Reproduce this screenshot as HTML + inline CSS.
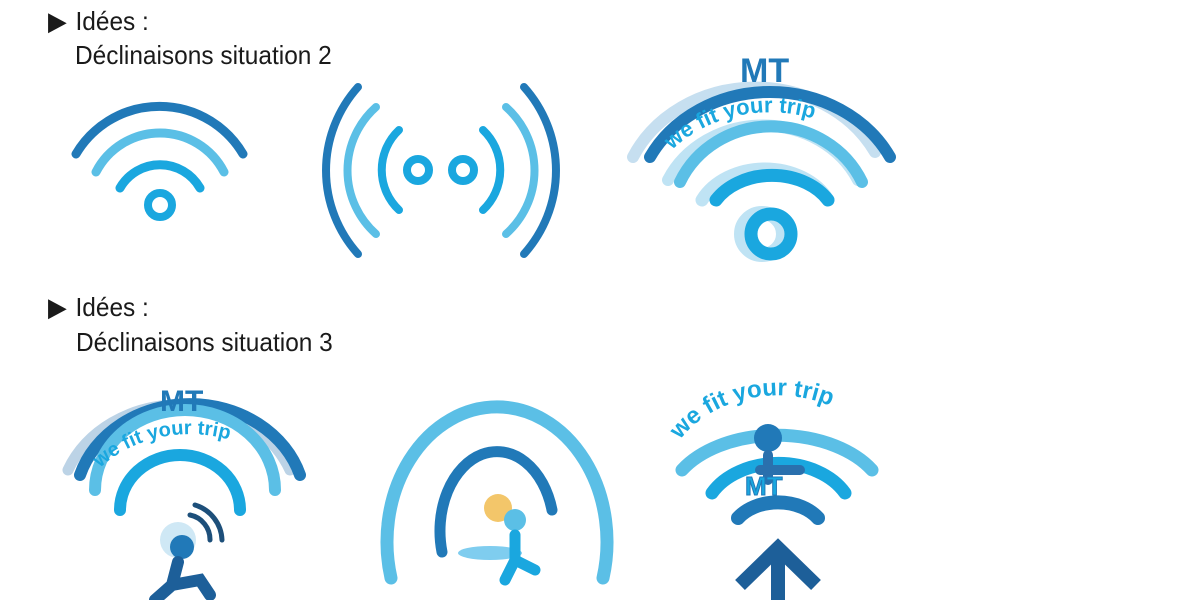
<!DOCTYPE html>
<html><head><meta charset="utf-8"><style>
html,body{margin:0;padding:0;background:#fff;width:1181px;height:600px;overflow:hidden;position:relative}
.t{position:absolute;font-family:"Liberation Sans Narrow","Liberation Sans",sans-serif;font-size:26px;color:#1a1a1a;transform-origin:0 0;transform:scaleX(0.94);white-space:nowrap;line-height:30px}
svg{position:absolute;left:0;top:0}
</style></head><body>
<div class="t" style="left:48px;top:6px">▶ <span style="margin-left:2px">Idées :</span></div>
<div class="t" style="left:75px;top:40px">Déclinaisons situation 2</div>
<div class="t" style="left:48px;top:292px">▶ <span style="margin-left:2px">Idées :</span></div>
<div class="t" style="left:76px;top:327px">Déclinaisons situation 3</div>
<svg width="1181" height="600" viewBox="0 0 1181 600" fill="none" stroke-linecap="round">
<defs>
<path id="ta" d="M672 150 A130 110 0 0 1 868 150"/>
<path id="tb" d="M100 468 A120 100 0 0 1 280 468"/>
<path id="tc" d="M680 440 A115 95 0 0 1 875 440"/>
</defs>
<!-- icon 1 -->
<path d="M76 154 A97 97 0 0 1 243 154" stroke="#2179b8" stroke-width="9"/>
<path d="M96 172 A72 72 0 0 1 224 172" stroke="#5bbfe6" stroke-width="9"/>
<path d="M120 188 A46 46 0 0 1 200 188" stroke="#1aa7df" stroke-width="9"/>
<circle cx="160" cy="205" r="12" stroke="#1aa7df" stroke-width="8"/>
<!-- icon 2 -->
<circle cx="418" cy="170" r="11" stroke="#1aa7df" stroke-width="8"/>
<circle cx="463" cy="170" r="11" stroke="#1aa7df" stroke-width="8"/>
<path d="M399 130 A55 55 0 0 0 399 210" stroke="#1aa7df" stroke-width="8"/>
<path d="M483 130 A55 55 0 0 1 483 210" stroke="#1aa7df" stroke-width="8"/>
<path d="M376 107 A85 85 0 0 0 376 234" stroke="#5bbfe6" stroke-width="8"/>
<path d="M506 107 A85 85 0 0 1 506 234" stroke="#5bbfe6" stroke-width="8"/>
<path d="M358 87 A125 125 0 0 0 358 254" stroke="#2179b8" stroke-width="8"/>
<path d="M524 87 A125 125 0 0 1 524 254" stroke="#2179b8" stroke-width="8"/>
<!-- icon 3 -->
<path d="M633 157 A135 120 0 0 1 875 152" stroke="#c6dff0" stroke-width="12"/>
<path d="M650 157 A135 120 0 0 1 890 157" stroke="#2179b8" stroke-width="12"/>
<path d="M668 180 A105 95 0 0 1 858 180" stroke="#bfe3f4" stroke-width="12"/>
<path d="M680 182 A100 95 0 0 1 862 182" stroke="#5bbfe6" stroke-width="12"/>
<path d="M702 200 A70 55 0 0 1 828 200" stroke="#bfe3f4" stroke-width="13"/>
<path d="M716 200 A65 50 0 0 1 828 200" stroke="#1aa7df" stroke-width="13"/>
<circle cx="762" cy="234" r="21" stroke="#bfe3f4" stroke-width="14"/>
<circle cx="771" cy="234" r="20" stroke="#1aa7df" stroke-width="13"/>
<text x="740" y="82" font-family="Liberation Sans,sans-serif" font-weight="bold" font-size="34" fill="#2179b8" stroke="none">MT</text>
<text font-family="Liberation Sans,sans-serif" font-weight="bold" font-size="22" fill="#1aa7df" stroke="none"><textPath href="#ta">we fit your trip</textPath></text>
<!-- bottom left -->
<path d="M68 470 A120 105 0 0 1 290 470" stroke="#bcd3e6" stroke-width="11"/>
<path d="M80 475 A115 100 0 0 1 300 475" stroke="#2179b8" stroke-width="12"/>
<path d="M95 490 A90 80 0 0 1 275 490" stroke="#5bbfe6" stroke-width="12"/>
<path d="M120 510 A60 55 0 0 1 240 510" stroke="#1aa7df" stroke-width="12"/>
<circle cx="178" cy="540" r="18" fill="#cfe8f5" stroke="none"/>
<path d="M190 515 A25 25 0 0 1 210 540 M195 505 A38 38 0 0 1 222 540" stroke="#1d4f7a" stroke-width="5"/>
<circle cx="182" cy="547" r="12" fill="#2179b8" stroke="none"/>
<path d="M178 562 L172 585 L200 580 L210 595 M172 585 L155 600" stroke="#1d5f99" stroke-width="12"/>
<text x="160" y="411" font-family="Liberation Sans,sans-serif" font-weight="bold" font-size="30" fill="#2179b8" stroke="none">MT</text>
<text font-family="Liberation Sans,sans-serif" font-weight="bold" font-size="20" fill="#1aa7df" stroke="none"><textPath href="#tb">we fit your trip</textPath></text>
<!-- bottom middle -->
<path d="M391 578 A110 135 0 1 1 603 578" stroke="#5bbfe6" stroke-width="13"/>
<path d="M442 552 A56 78 0 0 1 552 510" stroke="#2179b8" stroke-width="11"/>
<circle cx="498" cy="508" r="14" fill="#f3c66a" stroke="none"/>
<circle cx="515" cy="520" r="11" fill="#5bbfe6" stroke="none"/>
<ellipse cx="490" cy="553" rx="32" ry="7" fill="#7fcdef" stroke="none"/>
<path d="M515 535 L515 560 L535 570 M515 560 L505 580" stroke="#1aa7df" stroke-width="11"/>
<!-- bottom right -->
<text font-family="Liberation Sans,sans-serif" font-weight="bold" font-size="24" fill="#1aa7df" stroke="none"><textPath href="#tc">we fit your trip</textPath></text>
<path d="M682 470 A110 70 0 0 1 872 470" stroke="#5bbfe6" stroke-width="13"/>
<path d="M712 493 A75 55 0 0 1 845 493" stroke="#1aa7df" stroke-width="13"/>
<path d="M738 518 A48 35 0 0 1 818 518" stroke="#2179b8" stroke-width="14"/>
<circle cx="768" cy="438" r="14" fill="#2179b8" stroke="none"/>
<path d="M768 455 L768 480 M760 470 L800 470" stroke="#2a70ad" stroke-width="10"/>
<text x="745" y="495" font-family="Liberation Sans,sans-serif" font-weight="bold" font-size="26" fill="#1aa7df" stroke="#2179b8" stroke-width="1">MT</text>
<path d="M740 585 L778 548 L816 585 M778 548 L778 600" stroke="#1d5f99" stroke-width="14" stroke-linecap="butt"/>
</svg>
</body></html>
